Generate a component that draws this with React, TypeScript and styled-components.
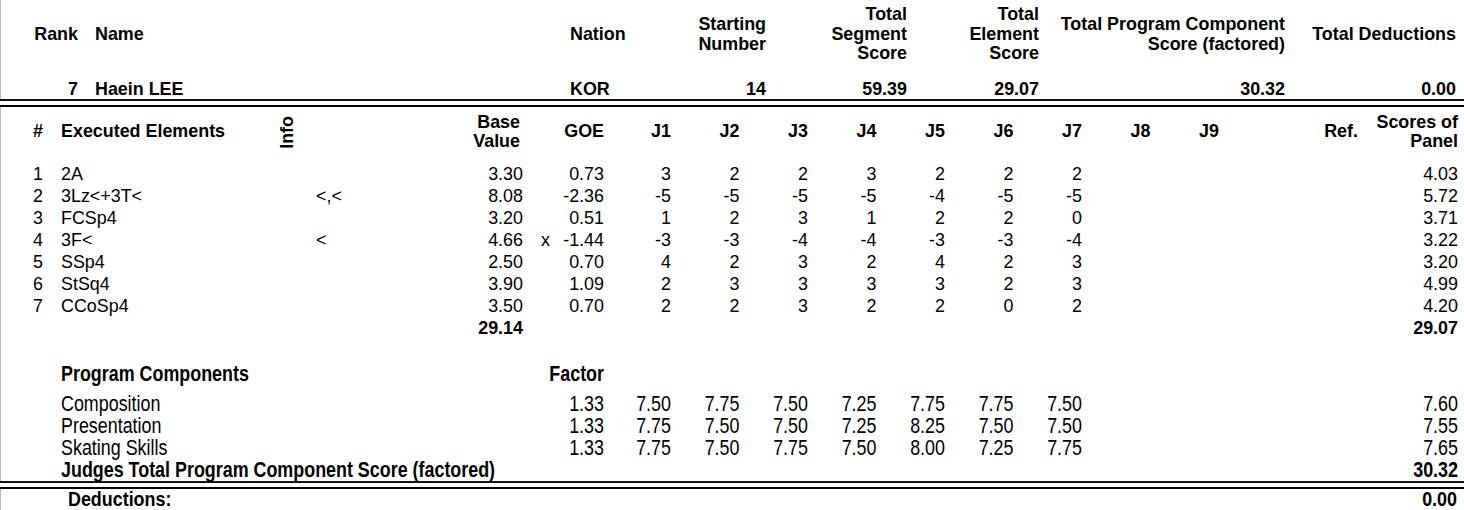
import React from 'react';
import styled, { createGlobalStyle, css } from 'styled-components';

const Global = createGlobalStyle`
  html, body { margin: 0; padding: 0; background: #fff; }
  body {
    font-family: "Liberation Sans", Arial, sans-serif;
    font-size: 17.9px;
    color: #000;
  }
`;

const Page = styled.div`
  width: 1464px;
  height: 510px;
  overflow: hidden;
  display: flex;
  flex-direction: column;
`;

const Section = styled.section`
  border-left: 1px solid #b8b8b8;
`;

const DoubleRule = styled.div`
  height: 8px;
  box-sizing: border-box;
  border-top: 2px solid #111;
  border-bottom: 2px solid #000;
`;

/* ---------- top summary ---------- */
const SummaryGrid = styled.div`
  display: grid;
  grid-template-columns: 77px 492px 110px 86px 141px 132px 246px 171px 8px;
  grid-template-rows: 69px 30px;
`;

type Align = 'left' | 'right' | 'center';

const Cell = styled.div<{ $align?: Align; $bold?: boolean; $pl?: number; $pr?: number; $span?: string }>`
  text-align: ${(p) => p.$align || 'left'};
  font-weight: ${(p) => (p.$bold ? 700 : 400)};
  padding-left: ${(p) => p.$pl || 0}px;
  padding-right: ${(p) => p.$pr || 0}px;
  white-space: nowrap;
  line-height: 19.5px;
  ${(p) => p.$span && css`grid-column: ${p.$span};`}
`;

const SumHead = styled(Cell)`
  align-self: center;
  font-weight: 700;
`;

const SumValue = styled(Cell)`
  align-self: end;
  font-weight: 700;
  padding-bottom: 0;
`;

/* ---------- element table ---------- */
const cols = css`
  display: grid;
  grid-template-columns: 60px 210px 35px 135px 82px 38px 43px 67px repeat(8, 68.5px) 139px 100px 7px;
  align-items: center;
`;

const HeadRow = styled.div`
  ${cols};
  height: 50px;
`;

const Row = styled.div<{ $gap?: number }>`
  ${cols};
  height: 22px;
  margin-top: ${(p) => p.$gap || 0}px;
`;

const Rows = styled.div`
  margin-top: 7px;
  display: flex;
  flex-direction: column;
`;

const Vertical = styled.div`
  justify-self: center;
  writing-mode: vertical-rl;
  transform: rotate(180deg);
  font-weight: 700;
  line-height: 16px;
  margin-right: 3px;
`;

const Tall = styled.span`
  display: inline-block;
  transform: translateY(1px) scaleY(1.2);
`;

const DeductionRow = styled.div`
  display: flex;
  justify-content: space-between;
  align-items: center;
  height: 21px;
  padding: 0 7px 0 67px;
  font-weight: 700;
  line-height: 19px;
`;

const TallEnd = styled.span`
  display: inline-block;
  transform: scaleY(1.15);
`;

const judges = ['J1', 'J2', 'J3', 'J4', 'J5', 'J6', 'J7', 'J8', 'J9'];

const elements = [
  { n: 1, name: '2A', info: '', base: '3.30', x: '', goe: '0.73', j: ['3', '2', '2', '3', '2', '2', '2'], panel: '4.03' },
  { n: 2, name: '3Lz<+3T<', info: '<,<', base: '8.08', x: '', goe: '-2.36', j: ['-5', '-5', '-5', '-5', '-4', '-5', '-5'], panel: '5.72' },
  { n: 3, name: 'FCSp4', info: '', base: '3.20', x: '', goe: '0.51', j: ['1', '2', '3', '1', '2', '2', '0'], panel: '3.71' },
  { n: 4, name: '3F<', info: '<', base: '4.66', x: 'x', goe: '-1.44', j: ['-3', '-3', '-4', '-4', '-3', '-3', '-4'], panel: '3.22' },
  { n: 5, name: 'SSp4', info: '', base: '2.50', x: '', goe: '0.70', j: ['4', '2', '3', '2', '4', '2', '3'], panel: '3.20' },
  { n: 6, name: 'StSq4', info: '', base: '3.90', x: '', goe: '1.09', j: ['2', '3', '3', '3', '3', '2', '3'], panel: '4.99' },
  { n: 7, name: 'CCoSp4', info: '', base: '3.50', x: '', goe: '0.70', j: ['2', '2', '3', '2', '2', '0', '2'], panel: '4.20' },
];

const components = [
  { name: 'Composition', factor: '1.33', j: ['7.50', '7.75', '7.50', '7.25', '7.75', '7.75', '7.50'], panel: '7.60' },
  { name: 'Presentation', factor: '1.33', j: ['7.75', '7.50', '7.50', '7.25', '8.25', '7.50', '7.50'], panel: '7.55' },
  { name: 'Skating Skills', factor: '1.33', j: ['7.75', '7.50', '7.75', '7.50', '8.00', '7.25', '7.75'], panel: '7.65' },
];

const JudgeCells = ({ values, tall }: { values: string[]; tall?: boolean }) => (
  <>
    {Array.from({ length: 9 }).map((_, i) => (
      <Cell key={i} $align="right">
        {tall ? <Tall>{values[i] ?? ''}</Tall> : values[i] ?? ''}
      </Cell>
    ))}
  </>
);

export default function App() {
  return (
    <Page>
      <Global />
      <Section>
        <SummaryGrid>
          <SumHead $align="right">Rank</SumHead>
          <SumHead $pl={17}>Name</SumHead>
          <SumHead>Nation</SumHead>
          <SumHead $align="right">Starting<br />Number</SumHead>
          <SumHead $align="right">Total<br />Segment<br />Score</SumHead>
          <SumHead $align="right">Total<br />Element<br />Score</SumHead>
          <SumHead $align="right">Total Program Component<br />Score (factored)</SumHead>
          <SumHead $align="right">Total Deductions</SumHead>
          <div />
          <SumValue $align="right">7</SumValue>
          <SumValue $pl={17}>Haein LEE</SumValue>
          <SumValue>KOR</SumValue>
          <SumValue $align="right">14</SumValue>
          <SumValue $align="right">59.39</SumValue>
          <SumValue $align="right">29.07</SumValue>
          <SumValue $align="right">30.32</SumValue>
          <SumValue $align="right">0.00</SumValue>
          <div />
        </SummaryGrid>
      </Section>
      <DoubleRule />
      <Section>
        <HeadRow>
          <Cell $bold $pl={32}>#</Cell>
          <Cell $bold>Executed Elements</Cell>
          <Vertical>Info</Vertical>
          <div />
          <Cell $bold $align="right" $pr={3}>Base<br />Value</Cell>
          <div />
          <Cell $bold $align="right">GOE</Cell>
          {judges.map((j) => (
            <Cell key={j} $bold $align="right">{j}</Cell>
          ))}
          <Cell $bold $align="right">Ref.</Cell>
          <Cell $bold $align="right">Scores of<br />Panel</Cell>
        </HeadRow>
        <Rows>
          {elements.map((e) => (
            <Row key={e.n}>
              <Cell $pl={32}>{e.n}</Cell>
              <Cell>{e.name}</Cell>
              <div />
              <Cell $pl={10}>{e.info}</Cell>
              <Cell $align="right">{e.base}</Cell>
              <Cell $pl={18}>{e.x}</Cell>
              <Cell $align="right">{e.goe}</Cell>
              <JudgeCells values={e.j} />
              <div />
              <Cell $align="right">{e.panel}</Cell>
            </Row>
          ))}
          <Row>
            <Cell $span="5 / 6" $bold $align="right">29.14</Cell>
            <Cell $span="18 / 19" $bold $align="right">29.07</Cell>
          </Row>
        </Rows>
        <Row $gap={23}>
          <Cell $span="2 / 5" $bold><Tall>Program Components</Tall></Cell>
          <Cell $span="5 / 8" $bold $align="right"><Tall>Factor</Tall></Cell>
        </Row>
        <Row $gap={8}>
          <Cell $span="2 / 5"><Tall>{components[0].name}</Tall></Cell>
          <Cell $span="5 / 8" $align="right"><Tall>{components[0].factor}</Tall></Cell>
          <JudgeCells values={components[0].j} tall />
          <div />
          <Cell $align="right"><Tall>{components[0].panel}</Tall></Cell>
        </Row>
        {components.slice(1).map((c) => (
          <Row key={c.name}>
            <Cell $span="2 / 5"><Tall>{c.name}</Tall></Cell>
            <Cell $span="5 / 8" $align="right"><Tall>{c.factor}</Tall></Cell>
            <JudgeCells values={c.j} tall />
            <div />
            <Cell $align="right"><Tall>{c.panel}</Tall></Cell>
          </Row>
        ))}
        <Row>
          <Cell $span="2 / 8" $bold><Tall>Judges Total Program Component Score (factored)</Tall></Cell>
          <Cell $span="18 / 19" $bold $align="right"><Tall>30.32</Tall></Cell>
        </Row>
      </Section>
      <DoubleRule />
      <Section>
        <DeductionRow>
          <TallEnd>Deductions:</TallEnd>
          <TallEnd>0.00</TallEnd>
        </DeductionRow>
      </Section>
    </Page>
  );
}
